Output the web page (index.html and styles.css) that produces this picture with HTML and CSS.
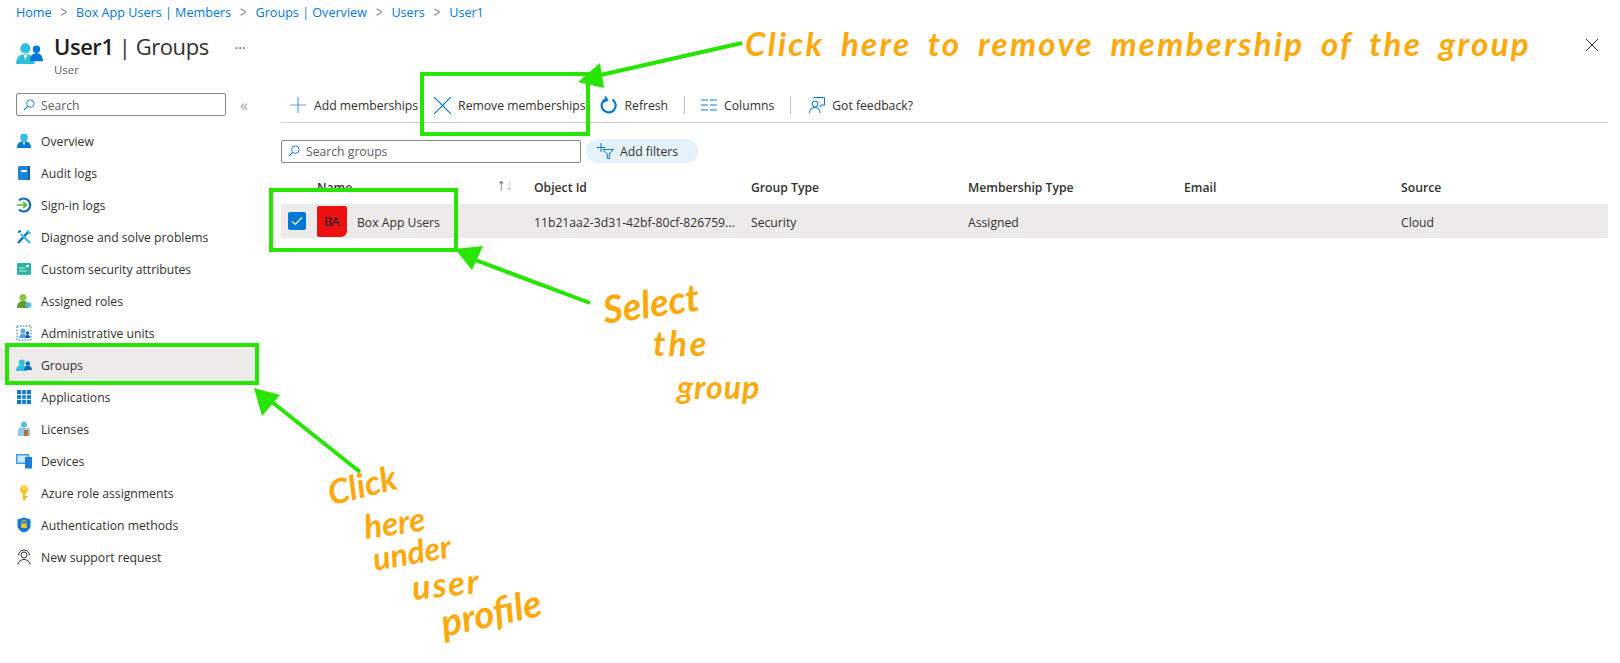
FILE: index.html
```html
<!DOCTYPE html>
<html lang="en">
<head>
  <meta charset="UTF-8" />
  <meta name="viewport" content="width=device-width, initial-scale=1.0"/>
  <title>User1 | Groups</title>
  <link rel="stylesheet" href="styles.css">
</head>
<body>

<nav class="crumbs">
  <a>Home</a><span class="sep">&gt;</span>
  <a>Box App Users | Members</a><span class="sep">&gt;</span>
  <a>Groups | Overview</a><span class="sep">&gt;</span>
  <a>Users</a><span class="sep">&gt;</span>
  <a>User1</a>
</nav>

<div class="blade">
  <aside class="side">
    <div class="title-row">
      <svg class="title-icon" viewBox="0 0 30 26">
        <circle cx="10" cy="8" r="5.5" fill="#32bedd"/>
        <path d="M0 25c0-8 4-11 10-11s10 3 10 11z" fill="#32bedd"/>
        <path d="M8 15l2 6 2-6z" fill="#fff"/>
        <circle cx="22" cy="9" r="4" fill="#0078d4"/>
        <path d="M15 22c0-6 3-9 7-9s7 3 7 9z" fill="#0078d4"/>
      </svg>
      <div class="title-text">
        <h1><b>User1</b> | Groups</h1>
        <div class="subtitle">User</div>
      </div>
      <span class="more">&middot;&middot;&middot;</span>
    </div>

    <div class="side-search">
      <label class="search-box">
        <svg class="search-icon" viewBox="0 0 14 14"><circle cx="8.6" cy="5.4" r="4.4" fill="none" stroke="#0078d4"/><path d="M5.4 8.6L1 13" stroke="#0078d4" stroke-width="1.2"/></svg>
        <span>Search</span>
      </label>
      <span class="collapse">&laquo;</span>
    </div>

    <ul class="menu">
      <li>
        <svg viewBox="0 0 16 16"><circle cx="8" cy="4.5" r="3.8" fill="#32bedd"/><path d="M1 15c0-5 3-7 7-7s7 2 7 7z" fill="#0078d4"/><path d="M6.5 8.5L8 13l1.500-4.500z" fill="#cdeefa"/></svg>
        Overview
      </li>
      <li>
        <svg viewBox="0 0 16 16"><rect x="2" y="1" width="12" height="14" rx="1.500" fill="#1b84d8"/><rect x="5" y="5" width="6" height="2" fill="#fff"/><rect x="12" y="1" width="2" height="14" fill="#0f5fa8"/></svg>
        Audit logs
      </li>
      <li>
        <svg viewBox="0 0 16 16"><path d="M3 3.500A6.500 6.500 0 1 1 3 12.500" fill="none" stroke="#0f6cbd" stroke-width="2.200"/><path d="M1 8h9M7 4.800L10.500 8 7 11.200" fill="none" stroke="#5db82e" stroke-width="1.700"/></svg>
        Sign-in logs
      </li>
      <li>
        <svg viewBox="0 0 16 16"><path d="M2 14L12 3" stroke="#0f6cbd" stroke-width="2.400"/><path d="M11 1.500l3.500 3.500" stroke="#32bedd" stroke-width="2"/><path d="M14 14L5 5" stroke="#32bedd" stroke-width="2.400"/><path d="M1.500 3.500A3 3 0 0 1 5.500 1.500L4 4z" fill="#0f6cbd"/></svg>
        Diagnose and solve problems
      </li>
      <li>
        <svg viewBox="0 0 16 16"><rect x="1" y="2" width="14" height="12" rx="1" fill="#2bb5a0"/><path d="M3 7h6M3 10h8" stroke="#bfeee6" stroke-width="1.200"/><circle cx="11.500" cy="5" r="1.500" fill="#e6fbf7"/></svg>
        Custom security attributes
      </li>
      <li>
        <svg viewBox="0 0 16 16"><circle cx="7" cy="4.500" r="3.500" fill="#8cc63f"/><path d="M1 15c0-5 2.500-7 6-7s5 1.500 5.500 4v3z" fill="#5a9e2f"/><circle cx="12.500" cy="12" r="2.800" fill="#50c0e8"/></svg>
        Assigned roles
      </li>
      <li>
        <svg viewBox="0 0 16 16"><rect x="1" y="1" width="14" height="14" fill="none" stroke="#0f6cbd" stroke-dasharray="1.500 1.500"/><circle cx="7" cy="6" r="2.500" fill="#5ea0ef"/><path d="M3 13c0-3 2-4.500 4-4.500s4 1.500 4 4.500z" fill="#5ea0ef"/><circle cx="11.500" cy="8" r="1.700" fill="#0f5fa8"/><path d="M9.500 13c0-2 1-3.500 2-3.500s2.500 1 2.500 3.500z" fill="#0f5fa8"/></svg>
        Administrative units
      </li>
      <li class="active">
        <svg viewBox="0 0 16 16"><circle cx="5.800" cy="5.500" r="3" fill="#32bedd"/><path d="M0 14c0-4 2.500-6 5.800-6s5.800 2 5.800 6z" fill="#32bedd"/><circle cx="11.800" cy="6.500" r="2.200" fill="#0f6cbd"/><path d="M8 13c.5-3 2-4.500 3.800-4.500S16 10 16 13z" fill="#0f6cbd"/></svg>
        Groups
      </li>
      <li>
        <svg viewBox="0 0 16 16" class="grid-icon"><path d="M1 1h14v14H1z" fill="#0f78d4"/><path d="M5.700 1v14M10.300 1v14M1 5.700h14M1 10.300h14" stroke="#fff"/></svg>
        Applications
      </li>
      <li>
        <svg viewBox="0 0 16 16"><circle cx="8" cy="3.500" r="3" fill="#5fb8dc"/><path d="M2 15V9c0-1.500 1-2.500 2.500-2.500h7C13 6.500 14 7.500 14 9v6z" fill="#8bcdea"/><rect x="8" y="9" width="4" height="6" fill="#c8682a"/></svg>
        Licenses
      </li>
      <li>
        <svg viewBox="0 0 16 16"><rect x="0" y="1" width="13" height="10" fill="#3aa0e8"/><rect x="1.500" y="2.500" width="10" height="7" fill="#cfe8fa"/><rect x="9" y="4" width="7" height="11.500" fill="#1b7fd8"/></svg>
        Devices
      </li>
      <li>
        <svg viewBox="0 0 16 16"><circle cx="8" cy="4.500" r="4" fill="#f7c325"/><rect x="6.700" y="7" width="2.800" height="8.500" fill="#f7c325"/><rect x="6" y="2.300" width="4" height="1.500" fill="#fff3b8"/><rect x="9" y="11" width="2" height="1.500" fill="#e5a50a"/></svg>
        Azure role assignments
      </li>
      <li>
        <svg viewBox="0 0 16 16"><path d="M8 0.500l6.500 2V8c0 4-3 6.500-6.500 7.500C4.500 14.500 1.500 12 1.500 8V2.500z" fill="#0f78d4"/><rect x="5.200" y="6.500" width="5.600" height="4.500" fill="#f7c325"/><path d="M6.200 6.500V5a1.800 1.800 0 0 1 3.600 0v1.500" fill="none" stroke="#f7c325"/></svg>
        Authentication methods
      </li>
      <li>
        <svg viewBox="0 0 16 16" fill="none" stroke="#323130"><circle cx="8" cy="6" r="3"/><path d="M2.500 6.500a5.500 5.500 0 0 1 11 0M2 15.500c.5-3.500 3-5 6-5s5.500 1.500 6 5"/></svg>
        New support request
      </li>
    </ul>
  </aside>

  <main class="content">
    <div class="close-row">
      <svg class="close" viewBox="0 0 12 12"><path d="M0 0l12 12M12 0L0 12" stroke="#323130"/></svg>
    </div>

    <div class="toolbar">
      <button class="tool tool-add">
        <svg viewBox="0 0 16 16"><path d="M8 0v16M0 8h16" stroke="#5ea6e6" stroke-width="1.200"/></svg>
        Add memberships
      </button>
      <button class="tool tool-remove">
        <svg viewBox="0 0 16 16"><path d="M0 0l16 16M16 0L0 16" stroke="#0078d4" stroke-width="1.100"/></svg>
        Remove memberships
      </button>
      <button class="tool tool-refresh">
        <svg viewBox="0 0 18 18"><path d="M12.500 3.600A7 7 0 1 1 6 3" fill="none" stroke="#0078d4" stroke-width="2.200"/><path d="M3.800 0.500l2.600 3.400-3.800 2" fill="none" stroke="#0078d4" stroke-width="1.700" transform="translate(1 0)"/></svg>
        Refresh
      </button>
      <span class="divider"></span>
      <button class="tool">
        <svg viewBox="0 0 16 16"><path d="M0 3h7M9 3h7M0 8h7M9 8h7M0 13h7M9 13h7" stroke="#5ea6e6" stroke-width="1.300"/></svg>
        Columns
      </button>
      <span class="divider divider-last"></span>
      <button class="tool">
        <svg viewBox="0 0 16 16" fill="none" stroke="#0078d4"><circle cx="6" cy="7" r="3"/><path d="M0.500 16c0-3.500 2.500-5.500 5.500-5.500s5 2 5 5.500M5 1.500V.5h10.500V8H12l-1 2"/></svg>
        Got feedback?
      </button>
    </div>

    <div class="filters">
      <label class="search-box search-groups">
        <svg class="search-icon" viewBox="0 0 14 14"><circle cx="8.600" cy="5.400" r="4.400" fill="none" stroke="#0078d4"/><path d="M5.400 8.600L1 13" stroke="#0078d4" stroke-width="1.200"/></svg>
        <span>Search groups</span>
      </label>
      <button class="add-filter">
        <svg viewBox="0 0 18 16" fill="none" stroke="#0078d4"><path d="M5 0v9M0.500 4.500h9"/><path d="M7 6.500h10.500l-4.200 4.500v4.500h-2V11z"/></svg>
        Add filters
      </button>
    </div>

    <div class="table">
      <div class="tr th">
        <div class="cell name-head">Name
          <span class="sort"><i>&uarr;</i><i class="off">&darr;</i></span>
        </div>
        <div class="cell">Object Id</div>
        <div class="cell">Group Type</div>
        <div class="cell">Membership Type</div>
        <div class="cell">Email</div>
        <div class="cell">Source</div>
      </div>
      <div class="tr selected">
        <div class="name-cell">
          <span class="check"><svg viewBox="0 0 12 10"><path d="M1 5.500L4.200 8.500 11 1.500" fill="none" stroke="#fff" stroke-width="1.100"/></svg></span>
          <span class="avatar">BA</span>
          <span class="cell">Box App Users</span>
        </div>
        <div class="cell">11b21aa2-3d31-42bf-80cf-826759...</div>
        <div class="cell">Security</div>
        <div class="cell">Assigned</div>
        <div class="cell"></div>
        <div class="cell">Cloud</div>
      </div>
    </div>
  </main>
</div>

<!-- green annotation boxes and arrows drawn over the page -->
<svg class="marks" viewBox="0 0 1620 663">
  <g fill="none" stroke="#27e500" stroke-width="4">
    <rect x="422" y="74" width="166" height="60"/>
    <rect x="271" y="190" width="185" height="60"/>
    <rect x="7" y="345" width="250" height="38"/>
    <path d="M742 43L596 76M590 303L470 258M360 472L272 402"/>
  </g>
  <g fill="#27e500">
    <path d="M578 82L600 63 604 88z"/>
    <path d="M455 249L483 246 472 270z"/>
    <path d="M254 388L280 395 262 416z"/>
  </g>
</svg>

<div class="notes">
  <span class="note note-top">Click here to remove membership of the group</span>
  <span class="note note-select">Select</span>
  <span class="note note-the">the</span>
  <span class="note note-group">group</span>
  <span class="note note-click">Click</span>
  <span class="note note-here">here</span>
  <span class="note note-under">under</span>
  <span class="note note-user">user</span>
  <span class="note note-profile">profile</span>
</div>

</body>
</html>
```

FILE: styles.css
```css
* { box-sizing: border-box; }
html, body { height: 100%; }
body {
  margin: 0; background: #fff; color: #323130; overflow: hidden; position: relative;
  font-family: "Open Sans", "Noto Sans", Arial, sans-serif; font-size: 12.2px;
}
ul { list-style: none; margin: 0; padding: 0; }
button {
  border: none; background: none; padding: 0; color: inherit;
  font: inherit; display: flex; align-items: center;
}

.crumbs {
  height: 24px; padding-left: 16px; display: flex; align-items: center;
  color: #0078d4; white-space: nowrap; font-size: 12.6px;
}
.crumbs .sep { color: #8a8886; margin: 0 9px; font-size: 11px; transform: scaleY(1.3); font-family: "Liberation Sans", sans-serif; }

.blade { display: flex; }
.side { width: 256px; flex: none; }
.content { flex: 1; padding: 0 12px 0 25px; min-width: 0; }

.title-row { height: 69px; padding-left: 16px; display: flex; position: relative; }
.title-icon { width: 28px; height: 24px; margin-top: 17px; flex: none; }
.title-text { margin-left: 10px; }
h1 {
  margin: 5px 0 0; font-size: 22px; font-weight: 400; line-height: 34px;
  color: #323130; white-space: nowrap; letter-spacing: -.45px;
}
h1 b { font-weight: 600; color: #201f1e; }
.subtitle { font-size: 11.4px; color: #605e5c; line-height: 14px; margin-top: 0; }
.more { margin: 14px 0 0 26px; color: #605e5c; font-size: 14px; letter-spacing: 0; }

.side-search { display: flex; align-items: center; padding-left: 16px; }
.search-box {
  height: 23px; width: 210px; border: 1px solid #8a8886; border-radius: 2px;
  display: flex; align-items: center; padding-left: 6px; color: #605e5c;
}
.search-box span { padding-top: 1px; }
.search-icon { width: 12px; height: 12px; margin-right: 6px; flex: none; }
.collapse { margin-left: 14px; color: #a19f9d; font-size: 16px; line-height: 20px; }

.menu { margin-top: 9px; }
.menu li { height: 32px; display: flex; align-items: center; padding-left: 16px; white-space: nowrap; }
.menu li svg { width: 16px; height: 16px; margin-right: 9px; flex: none; }
.menu li.active { background: #edebe9; }

.close-row { height: 56px; display: flex; justify-content: flex-end; padding: 15px 10px 0 0; }
.close { width: 12px; height: 12px; }

.toolbar {
  height: 43px; border-bottom: 1px solid #d2d0ce; display: flex; align-items: center;
  padding: 8px 0 0 9px; white-space: nowrap;
}
.tool { gap: 7px; }
.tool svg { width: 16px; height: 16px; flex: none; }
.tool-add { margin-right: 16px; gap: 8px; }
.tool-remove { margin-right: 14px; }
.tool-remove svg { width: 17px; height: 17px; }
.tool-refresh svg { width: 18px; height: 18px; }
.divider { width: 1px; height: 18px; background: #c8c6c4; margin: 0 16px; }
.divider-last { margin-right: 18px; }

.filters { display: flex; align-items: center; gap: 5px; margin-top: 16px; }
.search-groups { width: 300px; }
.add-filter {
  height: 24px; width: 112px; border-radius: 12px; background: #e5f1fb; padding-left: 10px; gap: 6px;
}
.add-filter svg { width: 18px; height: 16px; }

.table { margin-top: 13px; }
.tr {
  display: grid; grid-template-columns: 253px 217px 217px 216px 217px 1fr;
  align-items: center; white-space: nowrap;
}
.th { height: 28px; font-weight: 600; padding-bottom: 6px; }
.selected { height: 34px; background: #edebe9; }
.selected .cell { padding-top: 2px; }
.name-head { padding-left: 36px; position: relative; }
.sort { position: absolute; left: 216px; top: -3px; font-size: 16px; font-family: "Liberation Sans", sans-serif; font-weight: 400; }
.sort i { font-style: normal; color: #605e5c; }
.sort i.off { color: #c8c6c4; }
.name-cell { display: flex; align-items: center; padding-left: 7px; }
.check {
  width: 18px; height: 18px; border-radius: 2px; background: #0078d4; flex: none;
  display: flex; align-items: center; justify-content: center;
}
.check svg { width: 12px; height: 10px; }
.avatar {
  width: 30px; height: 31px; background: #ee1111; color: #000; border-radius: 2px 2px 6px 2px;
  margin: 0 10px 0 11px; flex: none; display: flex; align-items: center; justify-content: center;
}

.marks { position: absolute; left: 0; top: 0; width: 1620px; height: 663px; pointer-events: none; }

/* handwritten notes on top of the screenshot */
.note {
  position: absolute; color: #ffa80a; font-family: "Lato", sans-serif; font-style: italic;
  font-weight: 700; white-space: nowrap; font-size: 27px; line-height: 1; transform-origin: left center;
}
.note-top { left: 745px; top: 27px; font-size: 33px; letter-spacing: 2.3px; word-spacing: 7px; }
.note-select { left: 603px; top: 290px; font-size: 38px; transform: rotate(-8deg); }
.note-the { left: 653px; top: 326px; font-size: 34px; letter-spacing: 3px; }
.note-group { left: 677px; top: 371px; font-size: 32px; letter-spacing: 1px; }
.note-click { left: 328px; top: 476px; font-size: 34px; transform: rotate(-14deg); }
.note-here { left: 364px; top: 510px; font-size: 33px; transform: rotate(-8deg); }
.note-under { left: 373px; top: 543px; font-size: 32px; transform: rotate(-10deg); }
.note-user { left: 412px; top: 570px; font-size: 34px; letter-spacing: 2px; transform: rotate(-6deg); }
.note-profile { left: 441px; top: 603px; font-size: 38px; transform: rotate(-12deg); }
```
